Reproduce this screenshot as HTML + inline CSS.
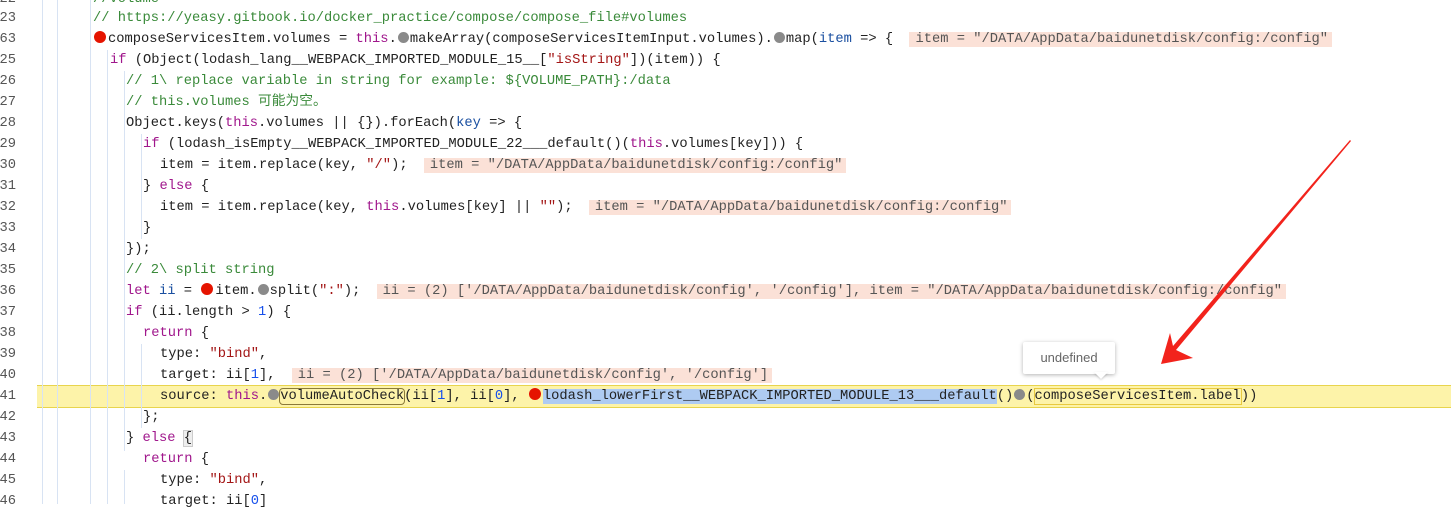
<!DOCTYPE html>
<html><head><meta charset="utf-8"><style>
body{margin:0;width:1451px;height:504px;overflow:hidden;background:#fff;position:relative;font-family:"Liberation Mono","Noto Sans CJK SC",monospace;font-size:13.75px;color:#222}
.l{position:absolute;height:21px;line-height:21px;white-space:pre}
.n{position:absolute;left:-10px;width:26px;text-align:right;height:21px;line-height:21px;color:#555}
.c{color:#3a8a3a}.k{color:#a0178c}.s{color:#a31515}.d{color:#1750eb}.p{color:#1a4fa0}
.v{background:#fbe1d7;color:#555;padding:0 4px 0 6px;margin-left:8px}
.r{display:inline-block;width:12px;height:12px;border-radius:50%;background:#e51400;vertical-align:-1px;margin:0 2px 0 1px}
.g{display:inline-block;width:11px;height:11px;border-radius:50%;background:#8a8a8a;vertical-align:-1px;margin:0 1px}
.gd{position:absolute;width:1px;background:#d8e3f3}
</style></head><body>
<div style="position:absolute;left:37px;top:385px;width:1414px;height:21px;background:#fdf3a9;border-top:1px solid #e8d44d;border-bottom:1px solid #e8d44d"></div>
<div class="gd" style="left:42px;top:0;height:504px"></div>
<div class="gd" style="left:57px;top:0;height:504px"></div>
<div class="gd" style="left:90px;top:0;height:504px"></div>
<div class="gd" style="left:107px;top:50px;height:454px"></div>
<div class="gd" style="left:124px;top:71px;height:380px"></div>
<div class="gd" style="left:124px;top:470px;height:34px"></div>
<div class="gd" style="left:141px;top:134px;height:105px"></div>
<div class="gd" style="left:141px;top:344px;height:84px"></div>

<div class="n" style="top:-11px">22</div><div class="l c" style="top:-11px;left:93px">//volume</div>
<div class="n" style="top:8px">23</div><div class="l c" style="top:8px;left:93px">// https://yeasy.gitbook.io/docker_practice/compose/compose_file#volumes</div>
<div class="n" style="top:29px">63</div><div class="l" style="top:29px;left:93px"><span class="r"></span>composeServicesItem.volumes = <span class="k">this</span>.<span class="g"></span>makeArray(composeServicesItemInput.volumes).<span class="g"></span>map(<span class="p">item</span> =&gt; { <span class="v">item = "/DATA/AppData/baidunetdisk/config:/config"</span></div>
<div class="n" style="top:50px">25</div><div class="l" style="top:50px;left:110px"><span class="k">if</span> (Object(lodash_lang__WEBPACK_IMPORTED_MODULE_15__[<span class="s">"isString"</span>])(item)) {</div>
<div class="n" style="top:71px">26</div><div class="l c" style="top:71px;left:126px">// 1\ replace variable in string for example: ${VOLUME_PATH}:/data</div>
<div class="n" style="top:92px">27</div><div class="l c" style="top:92px;left:126px">// this.volumes 可能为空。</div>
<div class="n" style="top:113px">28</div><div class="l" style="top:113px;left:126px">Object.keys(<span class="k">this</span>.volumes || {}).forEach(<span class="p">key</span> =&gt; {</div>
<div class="n" style="top:134px">29</div><div class="l" style="top:134px;left:143px"><span class="k">if</span> (lodash_isEmpty__WEBPACK_IMPORTED_MODULE_22___default()(<span class="k">this</span>.volumes[key])) {</div>
<div class="n" style="top:155px">30</div><div class="l" style="top:155px;left:160px">item = item.replace(key, <span class="s">"/"</span>); <span class="v">item = "/DATA/AppData/baidunetdisk/config:/config"</span></div>
<div class="n" style="top:176px">31</div><div class="l" style="top:176px;left:143px">} <span class="k">else</span> {</div>
<div class="n" style="top:197px">32</div><div class="l" style="top:197px;left:160px">item = item.replace(key, <span class="k">this</span>.volumes[key] || <span class="s">""</span>); <span class="v">item = "/DATA/AppData/baidunetdisk/config:/config"</span></div>
<div class="n" style="top:218px">33</div><div class="l" style="top:218px;left:143px">}</div>
<div class="n" style="top:239px">34</div><div class="l" style="top:239px;left:126px">});</div>
<div class="n" style="top:260px">35</div><div class="l c" style="top:260px;left:126px">// 2\ split string</div>
<div class="n" style="top:281px">36</div><div class="l" style="top:281px;left:126px"><span class="k">let</span> <span class="p">ii</span> = <span class="r"></span>item.<span class="g"></span>split(<span class="s">":"</span>); <span class="v">ii = (2) ['/DATA/AppData/baidunetdisk/config', '/config'], item = "/DATA/AppData/baidunetdisk/config:/config"</span></div>
<div class="n" style="top:302px">37</div><div class="l" style="top:302px;left:126px"><span class="k">if</span> (ii.length &gt; <span class="d">1</span>) {</div>
<div class="n" style="top:323px">38</div><div class="l" style="top:323px;left:143px"><span class="k">return</span> {</div>
<div class="n" style="top:344px">39</div><div class="l" style="top:344px;left:160px">type: <span class="s">"bind"</span>,</div>
<div class="n" style="top:365px">40</div><div class="l" style="top:365px;left:160px">target: ii[<span class="d">1</span>], <span class="v">ii = (2) ['/DATA/AppData/baidunetdisk/config', '/config']</span></div>
<div class="n" style="top:386px">41</div><div class="l" style="top:386px;left:160px">source: <span class="k">this</span>.<span class="g"></span><span style="outline:1px solid #8a7a3a;border-radius:3px">volumeAutoCheck</span>(ii[<span class="d">1</span>], ii[<span class="d">0</span>], <span class="r"></span><span style="background:#aecbf2">lodash_lowerFirst__WEBPACK_IMPORTED_MODULE_13___default</span>()<span class="g"></span>(<span style="outline:1px solid #e8c940">composeServicesItem.label</span>))</div>
<div class="n" style="top:407px">42</div><div class="l" style="top:407px;left:143px">};</div>
<div class="n" style="top:428px">43</div><div class="l" style="top:428px;left:126px">} <span class="k">else</span> <span style="background:#eee;outline:1px solid #ccc">{</span></div>
<div class="n" style="top:449px">44</div><div class="l" style="top:449px;left:143px"><span class="k">return</span> {</div>
<div class="n" style="top:470px">45</div><div class="l" style="top:470px;left:160px">type: <span class="s">"bind"</span>,</div>
<div class="n" style="top:491px">46</div><div class="l" style="top:491px;left:160px">target: ii[<span class="d">0</span>]</div>

<div style="position:absolute;left:1023px;top:342px;width:92px;height:32px;background:#fff;border-radius:2px;box-shadow:0 1px 4px rgba(0,0,0,.3);font-family:'Liberation Sans',sans-serif;font-size:13px;color:#666;line-height:32px;text-align:center">undefined</div>
<div style="position:absolute;left:1094px;top:372px;width:0;height:0;border-left:7px solid transparent;border-right:7px solid transparent;border-top:7px solid #fff;filter:drop-shadow(0 1px 1px rgba(0,0,0,.2))"></div>

<svg style="position:absolute;left:0;top:0" width="1451" height="504">
<polygon points="1350,140 1351,141 1176,350 1193,358 1161,364 1170,333 1173,346" fill="#f2231c"/>
</svg>
</body></html>
